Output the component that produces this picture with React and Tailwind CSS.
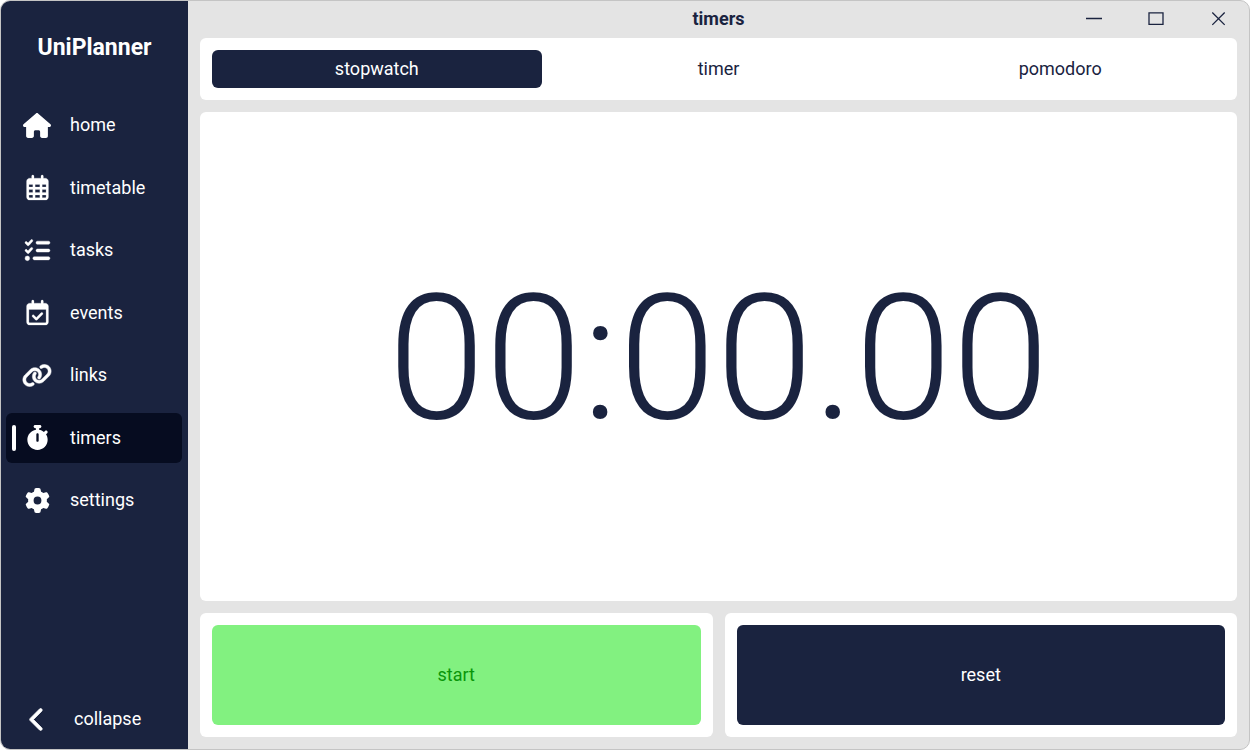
import { useState } from "react";
import {
  FaHouse,
  FaRegCalendarDays,
  FaListCheck,
  FaRegCalendarCheck,
  FaLink,
  FaStopwatch,
  FaGear,
  FaChevronLeft,
} from "react-icons/fa6";

const pages = [
  { name: "home", Icon: FaHouse, size: "h-[25px] w-[28px]" },
  { name: "timetable", Icon: FaRegCalendarDays, size: "h-[25px] w-[25px] stroke-[5px]" },
  { name: "tasks", Icon: FaListCheck, size: "h-[25px] w-[25px] stroke-[8px]" },
  { name: "events", Icon: FaRegCalendarCheck, size: "h-[25px] w-[25px] stroke-[5px]" },
  { name: "links", Icon: FaLink, size: "h-[25px] w-[30px] stroke-[10px]" },
  { name: "timers", Icon: FaStopwatch, size: "h-[25px] w-[25px]" },
  { name: "settings", Icon: FaGear, size: "h-[25px] w-[25px]" },
];

const tabs = ["stopwatch", "timer", "pomodoro"];

function Sidebar({ page, onSelect }) {
  return (
    <aside className="flex w-[187px] shrink-0 flex-col bg-[#1a233f] px-[5px] text-white">
      <h1 className="mt-[33px] text-center text-[23px] leading-7 font-bold">UniPlanner</h1>
      <nav className="mt-[38px] flex h-[425px] flex-col justify-between">
        {pages.map(({ name, Icon, size }) => (
          <a
            key={name}
            href={"#" + name}
            onClick={() => onSelect(name)}
            aria-current={page === name ? "page" : undefined}
            className={
              page === name
                ? "relative mr-px flex h-[50px] items-center gap-0.5 rounded-md bg-[#060c20]"
                : "relative mr-px flex h-[50px] items-center gap-0.5 rounded-md"
            }
          >
            {page === name && (
              <span className="absolute top-3 left-1.5 h-[26px] w-1 rounded-full bg-white" />
            )}
            <span className="flex w-[62px] justify-center">
              <Icon className={size + " overflow-visible"} aria-hidden="true" />
            </span>
            {name}
          </a>
        ))}
      </nav>
      <button type="button" className="mt-auto mb-[5px] flex h-[50px] items-center gap-1.5">
        <span className="flex w-[62px] justify-center">
          <FaChevronLeft
            className="h-[25px] w-[25px] overflow-visible stroke-[16px]"
            aria-hidden="true"
          />
        </span>
        collapse
      </button>
    </aside>
  );
}

function TitleBar({ title }) {
  const control = "flex w-[62px] items-center justify-center";
  return (
    <header className="grid h-[37px] shrink-0 grid-cols-[1fr_auto_1fr] pb-0.5">
      <h2 className="col-start-2 self-center font-bold">{title}</h2>
      <div className="flex justify-end">
        <button type="button" aria-label="Minimize" className={control}>
          <svg width="16" height="16" fill="none" stroke="currentColor" strokeWidth="1.3">
            <path d="M0 7.5h16" />
          </svg>
        </button>
        <button type="button" aria-label="Maximize" className={control}>
          <svg width="16" height="16" fill="none" stroke="currentColor" strokeWidth="1.3">
            <path d="M1 1.8h14v11.6H1z" />
          </svg>
        </button>
        <button type="button" aria-label="Close" className={control}>
          <svg width="16" height="16" fill="none" stroke="currentColor" strokeWidth="1.3">
            <path d="M2.3 1.5l12.4 12.4M14.7 1.5l-12.4 12.4" />
          </svg>
        </button>
      </div>
    </header>
  );
}

export default function App() {
  const [page, setPage] = useState("timers");
  const [tab, setTab] = useState("stopwatch");

  return (
    <div className="h-screen bg-white font-['Roboto',sans-serif] text-[18px] leading-6 text-[#1a233f]">
      <div className="flex h-full overflow-hidden rounded-[10px] border border-[#c4c4c4] bg-[#e4e4e4]">
        <Sidebar page={page} onSelect={setPage} />
        <div className="flex min-w-0 flex-1 flex-col">
          <TitleBar title={page} />
          <main className="flex flex-1 flex-col gap-3 px-3 pb-3">
            <div role="tablist" className="grid grid-cols-3 gap-3 rounded-md bg-white p-3">
              {tabs.map((name) => (
                <button
                  key={name}
                  type="button"
                  role="tab"
                  aria-selected={tab === name}
                  onClick={() => setTab(name)}
                  className={
                    tab === name
                      ? "h-[38px] rounded-md bg-[#1a233f] text-white"
                      : "h-[38px] rounded-md"
                  }
                >
                  {name}
                </button>
              ))}
            </div>
            <section className="flex flex-1 items-center justify-center rounded-md bg-white pt-[3px]">
              <time className="text-[175px] leading-none font-light">00:00.00</time>
            </section>
            <div className="grid grid-cols-2 gap-3">
              <div className="flex rounded-md bg-white p-3">
                <button
                  type="button"
                  className="h-[100px] flex-1 rounded-md bg-[#82f180] text-[#0a960a]"
                >
                  start
                </button>
              </div>
              <div className="flex rounded-md bg-white p-3">
                <button
                  type="button"
                  className="h-[100px] flex-1 rounded-md bg-[#1a233f] text-white"
                >
                  reset
                </button>
              </div>
            </div>
          </main>
        </div>
      </div>
    </div>
  );
}
